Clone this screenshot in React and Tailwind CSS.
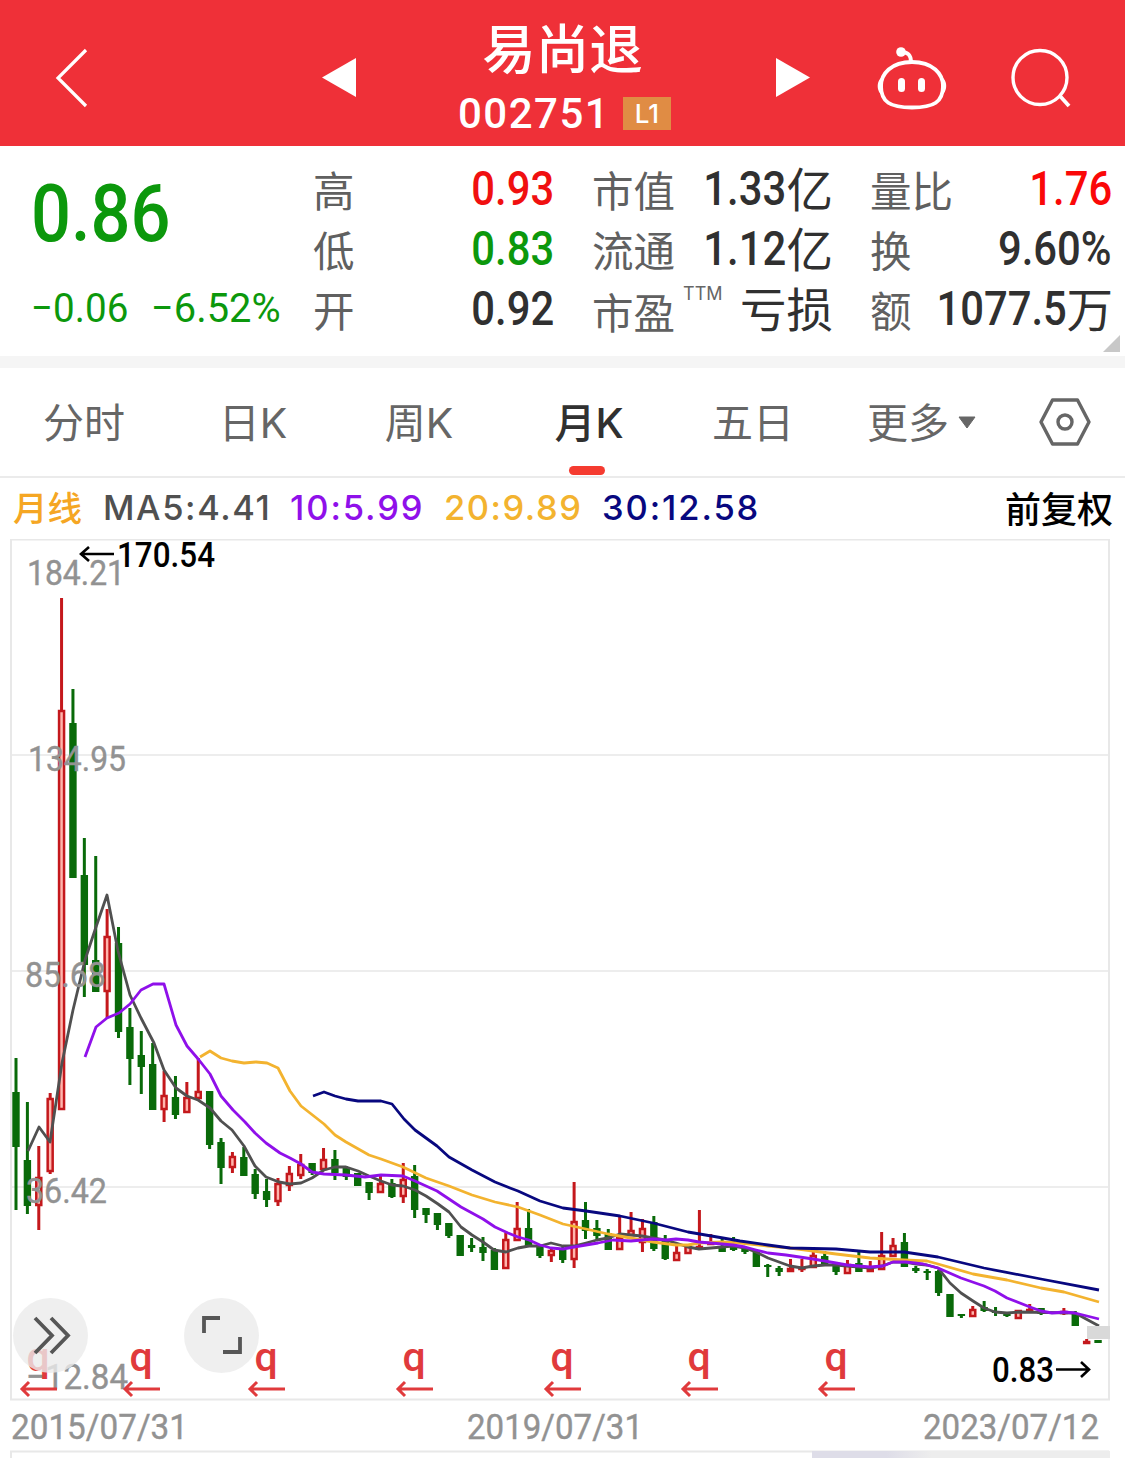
const CJK = "font-['Noto_Sans_CJK_SC',sans-serif]"
const DIN = "font-[Roboto,'Noto_Sans_CJK_SC',sans-serif]"

const START_X = 16
const STEP = 11.39

// direction, high, body top, body bottom, low
const candles = [
  ['g', 1058, 1092, 1147, 1210],
  ['g', 1102, 1160, 1206, 1214],
  ['r', 1146, 1177, 1206, 1230],
  ['r', 1093, 1098, 1172, 1174],
  ['r', 598, 710, 1110, 1110],
  ['g', 689, 723, 878, 878],
  ['g', 838, 875, 965, 997],
  ['g', 856, 960, 992, 992],
  ['r', 909, 936, 992, 1018],
  ['g', 927, 943, 1032, 1038],
  ['g', 1008, 1027, 1059, 1085],
  ['g', 1031, 1055, 1067, 1094],
  ['g', 1043, 1064, 1110, 1110],
  ['r', 1071, 1095, 1110, 1122],
  ['g', 1076, 1097, 1115, 1119],
  ['r', 1082, 1097, 1113, 1113],
  ['r', 1058, 1091, 1099, 1101],
  ['g', 1091, 1091, 1145, 1149],
  ['g', 1138, 1142, 1168, 1184],
  ['r', 1152, 1156, 1168, 1173],
  ['g', 1147, 1157, 1176, 1176],
  ['g', 1169, 1174, 1194, 1199],
  ['g', 1179, 1191, 1200, 1207],
  ['r', 1178, 1183, 1202, 1206],
  ['r', 1166, 1173, 1186, 1191],
  ['r', 1154, 1164, 1176, 1179],
  ['g', 1163, 1163, 1173, 1175],
  ['r', 1148, 1159, 1170, 1170],
  ['g', 1150, 1159, 1173, 1180],
  ['g', 1166, 1167, 1177, 1180],
  ['g', 1173, 1173, 1186, 1186],
  ['g', 1182, 1182, 1193, 1200],
  ['r', 1176, 1183, 1193, 1193],
  ['g', 1179, 1183, 1197, 1198],
  ['r', 1163, 1179, 1197, 1203],
  ['g', 1165, 1176, 1210, 1218],
  ['g', 1208, 1208, 1215, 1223],
  ['g', 1213, 1213, 1225, 1230],
  ['g', 1223, 1223, 1236, 1238],
  ['g', 1235, 1235, 1256, 1256],
  ['g', 1238, 1245, 1248, 1252],
  ['g', 1237, 1247, 1253, 1261],
  ['g', 1248, 1250, 1270, 1270],
  ['r', 1233, 1239, 1269, 1269],
  ['r', 1202, 1228, 1241, 1241],
  ['g', 1209, 1228, 1246, 1246],
  ['g', 1246, 1247, 1256, 1258],
  ['r', 1247, 1250, 1256, 1262],
  ['g', 1247, 1250, 1260, 1263],
  ['r', 1182, 1221, 1260, 1268],
  ['g', 1202, 1220, 1231, 1239],
  ['g', 1220, 1228, 1236, 1240],
  ['g', 1229, 1233, 1250, 1250],
  ['r', 1216, 1237, 1250, 1250],
  ['r', 1212, 1230, 1236, 1236],
  ['r', 1219, 1228, 1243, 1252],
  ['g', 1216, 1222, 1249, 1251],
  ['g', 1235, 1240, 1259, 1260],
  ['r', 1246, 1252, 1261, 1261],
  ['r', 1245, 1246, 1254, 1254],
  ['r', 1210, 1246, 1249, 1249],
  ['r', 1234, 1242, 1245, 1245],
  ['g', 1237, 1246, 1252, 1252],
  ['g', 1237, 1246, 1250, 1251],
  ['g', 1246, 1249, 1252, 1254],
  ['g', 1250, 1251, 1267, 1267],
  ['g', 1264, 1265, 1267, 1277],
  ['g', 1266, 1268, 1272, 1276],
  ['r', 1259, 1268, 1272, 1272],
  ['r', 1259, 1267, 1270, 1272],
  ['r', 1252, 1255, 1268, 1268],
  ['g', 1251, 1256, 1266, 1266],
  ['g', 1262, 1263, 1272, 1275],
  ['r', 1260, 1264, 1274, 1274],
  ['g', 1252, 1263, 1272, 1272],
  ['r', 1261, 1269, 1272, 1272],
  ['r', 1232, 1255, 1270, 1270],
  ['r', 1238, 1245, 1257, 1257],
  ['g', 1233, 1242, 1267, 1267],
  ['g', 1266, 1268, 1271, 1273],
  ['g', 1269, 1271, 1273, 1280],
  ['g', 1270, 1271, 1293, 1296],
  ['g', 1294, 1294, 1317, 1317],
  ['g', 1314, 1314, 1316, 1318],
  ['r', 1306, 1309, 1317, 1317],
  ['g', 1301, 1307, 1311, 1312],
  ['g', 1307, 1311, 1313, 1316],
  ['g', 1313, 1314, 1316, 1317],
  ['r', 1310, 1310, 1319, 1319],
  ['r', 1304, 1309, 1311, 1311],
  ['g', 1308, 1308, 1314, 1315],
  ['g', 1312, 1312, 1314, 1314],
  ['r', 1308, 1311, 1314, 1315],
  ['g', 1311, 1313, 1326, 1326],
  ['r', 1339, 1341, 1343, 1343],
  ['g', 1340, 1340, 1343, 1343],
]

const averages = [
  {
    color: '#505050',
    points:
      '28,1151 39,1127 50,1142 62,1063 73,1010 85,960 96,927 107,895 118,951 130,995 141,1018 154,1043 164,1070 176,1088 187,1096 198,1100 210,1108 221,1121 232,1130 244,1146 255,1166 266,1177 279,1182 290,1184 301,1183 312,1178 324,1170 335,1167 346,1167 358,1171 369,1176 381,1181 392,1185 403,1186 415,1190 426,1196 438,1204 449,1212 461,1227 472,1235 483,1242 494,1250 506,1252 518,1248 529,1246 540,1246 551,1243 563,1246 574,1246 586,1243 597,1240 608,1238 620,1234 631,1235 642,1236 653,1238 665,1240 676,1243 688,1247 699,1249 711,1248 722,1247 733,1246 745,1248 756,1252 768,1258 779,1262 790,1266 802,1268 813,1266 825,1265 836,1265 847,1266 859,1267 870,1268 882,1266 893,1262 905,1262 916,1264 927,1265 938,1268 950,1283 961,1293 973,1301 984,1308 995,1312 1007,1313 1019,1312 1075,1313 1099,1326',
  },
  {
    color: '#f3b32f',
    points:
      '200,1057 210,1051 221,1058 232,1061 244,1063 256,1062 267,1063 278,1068 290,1091 301,1106 324,1124 335,1135 346,1142 369,1155 381,1159 403,1167 426,1178 449,1186 472,1195 495,1202 518,1207 540,1215 563,1224 586,1229 608,1234 625,1237 653,1242 676,1245 688,1245 699,1243 723,1242 740,1243 768,1246 790,1248 813,1251 836,1254 853,1256 870,1258 904,1260 927,1261 938,1264 973,1274 1007,1280 1041,1288 1064,1292 1099,1302',
  },
  {
    color: '#08087f',
    points:
      '313,1096 324,1092 335,1096 346,1099 358,1101 381,1101 392,1104 404,1119 415,1130 437,1146 449,1157 472,1170 495,1182 510,1188 518,1191 540,1201 563,1208 586,1211 620,1216 653,1223 688,1232 723,1238 740,1241 768,1245 790,1248 836,1249 870,1252 904,1252 938,1257 984,1268 1041,1279 1099,1290',
  },
  {
    color: '#8f10ea',
    points:
      '85,1057 96,1027 107,1018 119,1013 130,1004 141,990 153,984 164,984 176,1025 187,1046 199,1060 210,1074 221,1096 233,1110 245,1122 255,1133 266,1143 280,1153 290,1158 301,1164 312,1172 324,1174 346,1175 365,1177 381,1175 403,1176 415,1181 437,1191 449,1199 461,1207 483,1219 495,1227 508,1233 518,1237 529,1240 540,1245 551,1248 563,1249 574,1247 586,1245 598,1243 613,1240 631,1241 653,1239 666,1240 676,1239 688,1240 699,1242 722,1244 733,1245 745,1247 756,1250 768,1253 786,1255 813,1259 836,1263 847,1265 859,1266 870,1267 883,1266 893,1262 906,1262 923,1264 938,1268 961,1278 984,1286 995,1291 1007,1298 1030,1307 1041,1311 1052,1313 1064,1312 1075,1313 1099,1319',
  },
]

const dividends = [38, 141, 266, 414, 562, 699, 836]

// text, x, baseline, width
const axisLabels = [
  ['184.21', 27, 585, 98],
  ['134.95', 28, 771, 98],
  ['85.68', 25, 987, 81],
  ['36.42', 26, 1203, 81],
  ['−12.84', 26, 1389, 102],
  ['2015/07/31', 11, 1439, 177],
  ['2019/07/31', 467, 1439, 176],
  ['2023/07/12', 923, 1439, 176],
]

const Candle = ({ data, index }) => {
  const [type, high, top, bottom, low] = data
  const x = START_X + STEP * index
  if (type === 'g') {
    return (
      <g fill="#096a09">
        <rect x={x - 1.5} y={high} width="3" height={low - high} />
        <rect x={x - 3.7} y={top} width="7.4" height={Math.max(bottom - top, 2)} />
      </g>
    )
  }
  return (
    <g>
      <rect x={x - 1.5} y={high} width="3" height={low - high} fill="#c4181c" />
      <rect
        x={x - 2.5}
        y={top + 1}
        width="5"
        height={Math.max(bottom - top - 2, 1)}
        fill="#ffb5ad"
        stroke="#c4181c"
        strokeWidth="2.5"
      />
    </g>
  )
}

const Chart = () => {
  return (
    <svg className="block" width="1125" height="919" viewBox="0 539 1125 919">
      <g stroke="#e8e8e8" strokeWidth="2" fill="none">
        <path d="M11 539.5H1109V1399.5H11Z" />
        <path d="M11 755H1109M11 971H1109M11 1187H1109" strokeWidth="1.5" />
        <path d="M11 1458V1451.5H1109" />
      </g>
      <defs>
        <linearGradient id="volume">
          <stop offset="0" stopColor="#dedde8" />
          <stop offset="0.25" stopColor="#dedde8" />
          <stop offset="0.4" stopColor="#ededed" />
        </linearGradient>
      </defs>
      <rect x="812" y="1451" width="298" height="7" fill="url(#volume)" />
      {candles.map((data, i) => (
        <Candle key={i} data={data} index={i} />
      ))}
      {averages.map((line) => (
        <polyline
          key={line.color}
          points={line.points}
          fill="none"
          stroke={line.color}
          strokeWidth="2.8"
          strokeLinejoin="round"
        />
      ))}
      <rect x="1087" y="1326" width="23" height="13" fill="#d9d9d9" />
      <g className={DIN} fontSize="35.5" fill="#929292" stroke="#929292" strokeWidth="0.4">
        {axisLabels.map(([text, x, y, width]) => (
          <text key={text} x={x} y={y} textLength={width} lengthAdjust="spacingAndGlyphs">
            {text}
          </text>
        ))}
      </g>
      <g className={DIN} fontSize="35.5" fontWeight="500" fill="#000">
        <text x="117" y="567" textLength="98" lengthAdjust="spacingAndGlyphs">
          170.54
        </text>
        <text x="992" y="1382" textLength="62" lengthAdjust="spacingAndGlyphs">
          0.83
        </text>
      </g>
      <g fill="none" stroke="#000" strokeWidth="2.6">
        <path d="M114 554H81M89 547L81 554L89 561" />
        <path d="M1056 1369.500H1089M1081 1362L1089 1369.500L1081 1377" />
      </g>
      {dividends.map((x) => (
        <g key={x}>
          <text
            x={x}
            y="1370.5"
            textAnchor="middle"
            fontSize="41"
            fontWeight="500"
            fill="#e03a3c"
            className="font-[Roboto,sans-serif]"
          >
            q
          </text>
          <path
            d={`M${x + 19} 1389H${x - 16}M${x - 9} 1382L${x - 16} 1389L${x - 9} 1396`}
            fill="none"
            stroke="#e03a3c"
            strokeWidth="3"
          />
        </g>
      ))}
      <g fill="#ebebeb" fillOpacity="0.8">
        <circle cx="50.500" cy="1335.500" r="37.500" />
        <circle cx="221.500" cy="1335.500" r="37.500" />
      </g>
      <g fill="none" stroke="#565656" strokeWidth="3.8">
        <path d="M35 1318L52 1335.500L35 1353M51 1318L68 1335.500L51 1353" />
        <path d="M204 1333V1318H220M240 1337V1352H223" />
      </g>
    </svg>
  )
}

const Header = () => {
  return (
    <header className="flex h-[146px] bg-[#ef3038] text-white">
      <svg width="458" height="146" viewBox="0 0 458 146">
        <path d="M86 50L58 78L86 106" fill="none" stroke="#fff" strokeWidth="3.2" />
        <path d="M322 77.500L356 58V97Z" fill="#fff" />
      </svg>
      <div className="flex w-[213px] flex-col items-center">
        <h1 className={`${CJK} mt-[18px] mr-[4px] h-[56px] text-[53.500px] leading-[56px] font-medium whitespace-nowrap`}>
          易尚退
        </h1>
        <div className="mt-[18px] flex h-[42px] w-full items-center justify-between">
          <span className={`${DIN} text-[42px] font-medium tracking-[1.500px]`}>002751</span>
          <span className="flex h-[33px] w-[48px] items-center justify-center bg-[#e08c44] font-[Inter,sans-serif] text-[26px] font-medium">
            L1
          </span>
        </div>
      </div>
      <svg width="454" height="146" viewBox="671 0 454 146">
        <path d="M810 77.500L776 58V97Z" fill="#fff" />
        <g fill="none" stroke="#fff" strokeWidth="3.8">
          <path d="M912 62C933 62 943 74 943 86C943 102 934 107.500 912 107.500C890 107.500 881 102 881 86C881 74 891 62 912 62Z" />
          <path d="M911 62C911 55 908 52 901 52" />
          <circle cx="1040" cy="77.500" r="27" strokeWidth="3.4" />
          <path d="M1060 96L1069 106" />
        </g>
        <g fill="#fff">
          <circle cx="901" cy="52" r="4.800" />
          <path d="M883 77C876 79 876 93 883 95ZM941 77C948 79 948 93 941 95Z" />
          <rect x="898" y="78" width="7" height="14" rx="3.500" />
          <rect x="918" y="78" width="7" height="14" rx="3.500" />
        </g>
      </svg>
    </header>
  )
}

const Stat = ({ label, note, value, unit, color = 'text-[#303030]' }) => {
  return (
    <div className="flex h-[60px] items-center justify-between whitespace-nowrap">
      <span className={`${CJK} ${note ? 'pt-[4px]' : 'pb-px'} text-[41.500px] leading-[54px] text-[#606060]`}>
        {label}
      </span>
      {note && (
        <span className="mr-auto ml-[8px] h-[53px] font-[Inter,sans-serif] text-[18px] leading-[22px] text-[#666]">
          {note}
        </span>
      )}
      <span className={`flex items-center justify-end ${color}`}>
        <span className={`${DIN} w-0 text-[48px] leading-[60px] font-medium`}>
          <span className="float-right inline-block origin-right scale-x-[0.87]">{value}</span>
        </span>
        {unit && <span className={`${CJK} -mr-px pb-[4px] text-[46.500px] leading-[56px]`}>{unit}</span>}
      </span>
    </div>
  )
}

const Quote = () => {
  return (
    <section className="relative flex h-[210px] bg-white">
      <div className={`${DIN} w-[313px] pl-[31px] text-[#0c980c]`}>
        <p className="mt-[28px] h-[80px] w-[160px] origin-left scale-x-[0.88] text-[80px] leading-[80px] font-medium">
          0.86
        </p>
        <div className="mt-[28px] flex h-[52px] items-center text-[41.500px] whitespace-nowrap">
          <span className="w-[120px] origin-left scale-x-[0.93]">−0.06</span>
          <span className="origin-left scale-x-[0.96]">−6.52%</span>
        </div>
      </div>
      <div className="mt-[13px] grid h-[180px] grid-cols-[241px_240px_242px] gap-x-[38px]">
        <Stat label="高" value="0.93" color="text-[#f01010]" />
        <Stat label="市值" value="1.33" unit="亿" />
        <Stat label="量比" value="1.76" color="text-[#fa0808]" />
        <Stat label="低" value="0.83" color="text-[#0c980c]" />
        <Stat label="流通" value="1.12" unit="亿" />
        <Stat label="换" value="9.60%" />
        <Stat label="开" value="0.92" />
        <Stat label="市盈" note="TTM" unit="亏损" />
        <Stat label="额" value="1077.5" unit="万" />
      </div>
      <svg className="absolute right-[5px] bottom-[4px]" width="17" height="17">
        <path d="M17 0V17H0Z" fill="#c8c8c8" />
      </svg>
    </section>
  )
}

const Tabs = () => {
  return (
    <nav className="flex h-[110px] items-center border-b-2 border-[#ebebeb] pt-[2px] font-[Inter,'Noto_Sans_CJK_SC',sans-serif] text-[41px] leading-[60px] whitespace-nowrap text-[#666]">
      <span className="w-[168px] text-center">分时</span>
      <span className="w-[170px] text-center">日K</span>
      <span className="w-[162px] text-center">周K</span>
      <span className="relative ml-[2px] w-[174px] text-center font-medium text-[#303030]">
        月K
        <span className="absolute -bottom-[22px] left-[67px] h-[9px] w-[36px] rounded-full bg-[#f53b30]" />
      </span>
      <span className="w-[154px] text-center">五日</span>
      <span className="ml-[37px]">更多</span>
      <svg className="ml-[8px]" width="20" height="14">
        <path d="M2 1H18L10 12Z" fill="#666" stroke="#666" strokeLinejoin="round" />
      </svg>
      <svg className="mb-[2px] ml-[61px]" width="54" height="50" fill="none" stroke="#666" strokeWidth="3.400">
        <path d="M14.500 3H39.500L51 25L39.500 47H14.500L3 25Z" strokeLinejoin="round" />
        <circle cx="27" cy="25" r="7" />
      </svg>
    </nav>
  )
}

const Legend = () => {
  return (
    <div className="flex h-[61px] items-center font-[Inter,'Noto_Sans_CJK_SC',sans-serif] text-[34.500px] leading-[60px] font-medium whitespace-nowrap">
      <span className="w-[89px] pl-[13px] text-[#f5a623]">月线</span>
      <span className="ml-[14px] w-[187px] pb-[2px] tracking-[1.600px] text-[#505050]">MA5:4.41</span>
      <span className="w-[154px] pb-[2px] tracking-[1.900px] text-[#8f10ea]">10:5.99</span>
      <span className="w-[158px] pb-[2px] tracking-[1.500px] text-[#f3b32f]">20:9.89</span>
      <span className="pb-[2px] tracking-[1.900px] text-[#08087f]">30:12.58</span>
      <span className="mr-[12px] ml-auto pt-[3px] text-[36px] text-black">前复权</span>
    </div>
  )
}

export default function App() {
  return (
    <div className="h-[1458px] w-[1125px] overflow-hidden bg-white">
      <Header />
      <Quote />
      <div className="h-[12px] bg-[#f5f5f5]" />
      <Tabs />
      <Legend />
      <Chart />
    </div>
  )
}
